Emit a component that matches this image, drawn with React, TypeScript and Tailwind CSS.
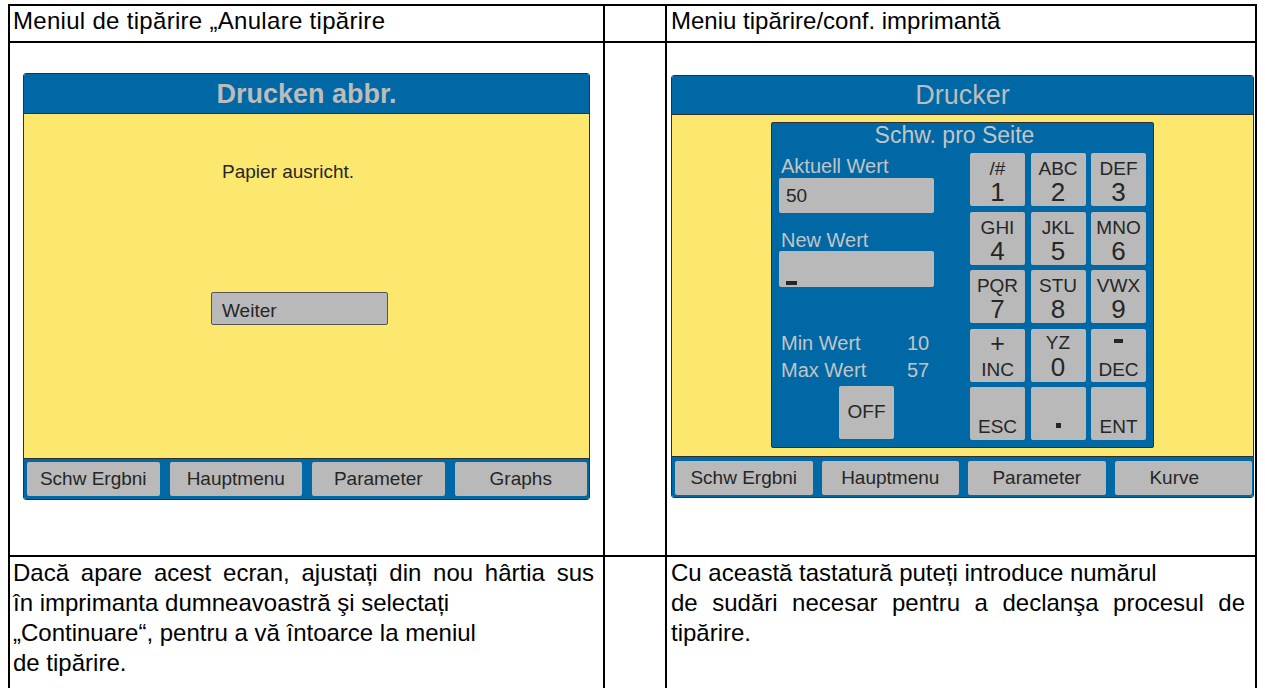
import React from "react";

const BLUE = "bg-[#0068a4]";

function BarButton({ label, extra = "", textExtra = "" }: { label: string; extra?: string; textExtra?: string }) {
  return (
    <div
      className={`flex-1 basis-0 h-[34px] rounded-[2px] bg-[#b9b9b9] flex items-center justify-center text-[19px] text-[#262626] ${extra}`}
    >
      <span className={textExtra}>{label}</span>
    </div>
  );
}

function LeftScreen() {
  return (
    <div className="ml-[13px] mt-[30px] w-[567px] h-[427px] flex flex-col border border-[#2f2f2f] rounded-[3px] overflow-hidden">
      <div className={`h-[40px] ${BLUE} border-b border-[#2f2f2f] flex items-center justify-center pt-[2px] text-[27px] font-bold text-[#bcbcbc]`}>
        Drucken abbr.
      </div>
      <div className="flex-1 bg-[#fde86f] flex flex-col">
        <div className="mt-[47px] ml-[198px] text-[19px] leading-[22px] text-[#262626]">Papier ausricht.</div>
        <div className="mt-[109px] ml-[187px] w-[177px] h-[33px] border border-[#555] rounded-[2px] bg-[#b9b9b9] pl-[10px] pt-[7px] text-[19px] leading-[22px] text-[#262626]">
          Weiter
        </div>
      </div>
      <div className={`h-[41px] ${BLUE} border-t border-[#2f2f2f] flex gap-[10px] pl-[3px] pr-[2px] pt-[3px]`}>
        <BarButton label="Schw Ergbni" />
        <BarButton label="Hauptmenu" />
        <BarButton label="Parameter" />
        <BarButton label="Graphs" />
      </div>
    </div>
  );
}

function Key({ children, className = "" }: { children: React.ReactNode; className?: string }) {
  return (
    <div className={`h-[53px] rounded-[2px] bg-[#b9b9b9] flex flex-col items-center text-[#262626] ${className}`}>
      {children}
    </div>
  );
}

function NumKey({ top, digit }: { top: string; digit: string }) {
  return (
    <Key className="pt-[6px]">
      <div className="text-[19px] leading-[20px]">{top}</div>
      <div className="text-[26px] leading-[26px]">{digit}</div>
    </Key>
  );
}

function RightScreen() {
  const rows: [string, string][] = [
    ["/#", "1"],
    ["ABC", "2"],
    ["DEF", "3"],
    ["GHI", "4"],
    ["JKL", "5"],
    ["MNO", "6"],
    ["PQR", "7"],
    ["STU", "8"],
    ["VWX", "9"],
  ];
  return (
    <div className="ml-[4px] mt-[32px] w-[583px] h-[423px] flex flex-col border border-[#2f2f2f] rounded-[3px] overflow-hidden">
      <div className={`h-[39px] ${BLUE} border-b border-[#2f2f2f] flex items-center justify-center text-[27px] text-[#bdbdbd]`}>
        Drucker
      </div>
      <div className="flex-1 bg-[#fde86f] flex flex-col">
        <div className={`mt-[7px] mx-auto w-[383px] h-[326px] ${BLUE} border border-[#2f2f2f] rounded-[2px] flex flex-col`}>
          <div className="text-center text-[23px] leading-[24px] text-[#c4c4c4] pr-[16px]">Schw. pro Seite</div>
          <div className="mt-[6px] flex items-start pl-[7px] pr-[7px] gap-[36px]">
            <div className="w-[155px] flex flex-col text-[20px] text-[#c4c4c4]">
              <div className="mt-[2px] pl-[2px] leading-[22px]">Aktuell Wert</div>
              <div className="mt-[1px] h-[35px] rounded-[2px] bg-[#b9b9b9] pl-[7px] pt-[7px] text-[19px] leading-[22px] text-[#262626]">
                50
              </div>
              <div className="mt-[16px] pl-[2px] leading-[22px]">New Wert</div>
              <div className="h-[36px] rounded-[2px] bg-[#b9b9b9] pl-[7px] pb-[2px] flex items-end">
                <div className="w-[11px] h-[4px] bg-[#262626]" />
              </div>
              <div className="mt-[43px] pl-[2px] leading-[27px] flex">
                <span className="w-[126px]">Min Wert</span>
                <span>10</span>
              </div>
              <div className="pl-[2px] leading-[27px] flex">
                <span className="w-[126px]">Max Wert</span>
                <span>57</span>
              </div>
              <div className="mt-[2px] ml-[60px] w-[55px] h-[53px] rounded-[2px] bg-[#b9b9b9] flex items-center justify-center text-[19px] text-[#262626]">
                OFF
              </div>
            </div>
            <div className="grid grid-cols-[55px_55px_55px] gap-x-[5.5px] gap-y-[5.5px]">
              {rows.map(([t, d]) => (
                <NumKey key={d} top={t} digit={d} />
              ))}
              <Key className="pt-[2px]">
                <div className="text-[25px] leading-[24px]">+</div>
                <div className="mt-[5px] text-[19px] leading-[20px]">INC</div>
              </Key>
              <Key className="pt-[4px]">
                <div className="text-[19px] leading-[20px]">YZ</div>
                <div className="mt-[1px] text-[26px] leading-[26px]">0</div>
              </Key>
              <Key className="pt-[10px]">
                <div className="w-[9px] h-[4px] bg-[#262626]" />
                <div className="mt-[17px] text-[19px] leading-[20px]">DEC</div>
              </Key>
              <Key className="justify-end pb-[3px]">
                <div className="text-[19px] leading-[20px]">ESC</div>
              </Key>
              <Key className="justify-end pb-[12px]">
                <div className="w-[5px] h-[5px] bg-[#262626]" />
              </Key>
              <Key className="justify-end pb-[3px]">
                <div className="text-[19px] leading-[20px]">ENT</div>
              </Key>
            </div>
          </div>
        </div>
      </div>
      <div className={`h-[41px] ${BLUE} border-t border-[#2f2f2f] flex gap-[9px] pl-[3px] pr-[1px] pt-[4px]`}>
        <BarButton label="Schw Ergbni" extra="h-[33px]" />
        <BarButton label="Hauptmenu" extra="h-[33px]" />
        <BarButton label="Parameter" extra="h-[33px]" />
        <BarButton label="Kurve" extra="h-[33px]" textExtra="mr-[18px]" />
      </div>
    </div>
  );
}

export default function App() {
  return (
    <div className="w-[1265px] h-[688px] overflow-hidden bg-white font-['Liberation_Sans',Arial,sans-serif] text-black">
      <div className="ml-[8px] mt-[4px] w-[1249px] border-2 border-black border-b-0 flex flex-col">
        {/* Row 1 */}
        <div className="h-[37px] flex border-b-2 border-black text-[24px] leading-[30px]">
          <div className="w-[595px] border-r-2 border-black pl-[3px] whitespace-nowrap tracking-[0.3px]">
            Meniul de tipărire „Anulare tipărire
          </div>
          <div className="w-[62px] border-r-2 border-black" />
          <div className="flex-1 pl-[4px] whitespace-nowrap">Meniu tipărire/conf. imprimantă</div>
        </div>
        {/* Row 2 */}
        <div className="h-[514px] flex border-b-2 border-black">
          <div className="w-[595px] border-r-2 border-black">
            <LeftScreen />
          </div>
          <div className="w-[62px] border-r-2 border-black" />
          <div className="flex-1">
            <RightScreen />
          </div>
        </div>
        {/* Row 3 */}
        <div className="h-[160px] flex text-[24px] leading-[30px]">
          <div className="w-[595px] border-r-2 border-black pl-[3px] pr-[9px] pt-[1px] whitespace-nowrap">
            <div className="[text-align-last:justify]">Dacă apare acest ecran, ajustați din nou hârtia sus</div>
            <div>în imprimanta dumneavoastră şi selectați</div>
            <div>„Continuare“, pentru a vă întoarce la meniul</div>
            <div>de tipărire.</div>
          </div>
          <div className="w-[62px] border-r-2 border-black" />
          <div className="flex-1 pl-[4px] pr-[10px] pt-[1px] whitespace-nowrap">
            <div>Cu această tastatură puteți introduce numărul</div>
            <div className="[text-align-last:justify]">de sudări necesar pentru a declanşa procesul de</div>
            <div>tipărire.</div>
          </div>
        </div>
      </div>
    </div>
  );
}
